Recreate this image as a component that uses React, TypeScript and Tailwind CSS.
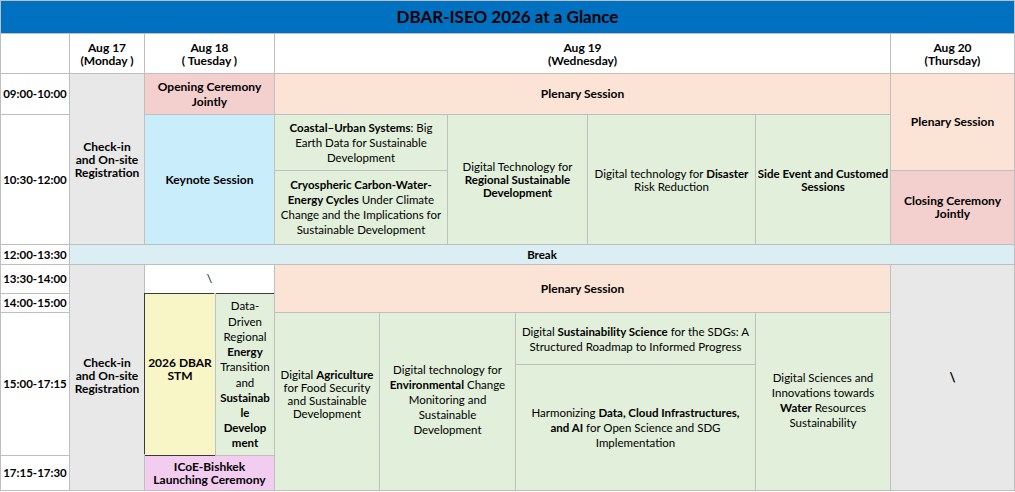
const font = { fontFamily: 'Lato, "Open Sans", sans-serif' };

type CellProps = { className: string; children?: React.ReactNode };

function Cell({ className, children }: CellProps) {
  return <div className={`flex flex-col items-center justify-center text-center text-black ${className}`}>{children}</div>;
}

export default function App() {
  return (
    <div className="bg-white w-[1015px] h-[492px]" style={font}>
      <div className="grid w-[1015px] gap-px p-px bg-[#bfbfbf] grid-cols-[68px_74px_70px_58px_104px_67px_67px_71px_167px_134px_123px] grid-rows-[32px_39px_40px_55px_73px_19px_28px_18px_51px_90px_34px]">
        {/* title */}
        <Cell className="col-start-1 col-span-11 row-start-1 bg-[#0070c0] text-[17px] font-bold">DBAR-ISEO 2026 at a Glance</Cell>

        {/* header */}
        <Cell className="col-start-1 row-start-2 bg-white" />
        <Cell className="col-start-2 row-start-2 bg-white text-[12px] font-bold leading-[13px]">
          <span>Aug 17</span>
          <span>(Monday )</span>
        </Cell>
        <Cell className="col-start-3 col-span-2 row-start-2 bg-white text-[12px] font-bold leading-[13px]">
          <span>Aug 18</span>
          <span>( Tuesday )</span>
        </Cell>
        <Cell className="col-start-5 col-span-6 row-start-2 bg-white text-[12px] font-bold leading-[13px]">
          <span>Aug 19</span>
          <span>(Wednesday)</span>
        </Cell>
        <Cell className="col-start-11 row-start-2 bg-white text-[12px] font-bold leading-[13px]">
          <span>Aug 20</span>
          <span>(Thursday)</span>
        </Cell>

        {/* time column */}
        <Cell className="col-start-1 row-start-3 bg-white text-[11.5px] font-bold">09:00-10:00</Cell>
        <Cell className="col-start-1 row-start-4 row-span-2 bg-white text-[11.5px] font-bold">10:30-12:00</Cell>
        <Cell className="col-start-1 row-start-6 bg-white text-[11.5px] font-bold">12:00-13:30</Cell>
        <Cell className="col-start-1 row-start-7 bg-white text-[11.5px] font-bold">13:30-14:00</Cell>
        <Cell className="col-start-1 row-start-8 bg-white text-[11.5px] font-bold">14:00-15:00</Cell>
        <Cell className="col-start-1 row-start-9 row-span-2 bg-white text-[11.5px] font-bold">15:00-17:15</Cell>
        <Cell className="col-start-1 row-start-11 bg-white text-[11.5px] font-bold">17:15-17:30</Cell>

        {/* morning */}
        <Cell className="col-start-2 row-start-3 row-span-3 bg-[#e8e8e8] text-[12px] font-bold leading-[13px]">
          <span>Check-in</span>
          <span>and On-site</span>
          <span>Registration</span>
        </Cell>
        <Cell className="col-start-3 col-span-2 row-start-3 bg-[#f3cfce] text-[12px] font-bold leading-[15px]">
          <span>Opening Ceremony</span>
          <span>Jointly</span>
        </Cell>
        <Cell className="col-start-5 col-span-6 row-start-3 bg-[#fbe3d6] text-[12px] font-bold">Plenary Session</Cell>
        <Cell className="col-start-11 row-start-3 row-span-2 bg-[#fbe3d6] text-[12px] font-bold">Plenary Session</Cell>

        <Cell className="col-start-3 col-span-2 row-start-4 row-span-2 bg-[#caedfb] text-[12px] font-bold">Keynote Session</Cell>
        <Cell className="col-start-5 col-span-2 row-start-4 bg-[#e2efda] text-[11.5px] leading-[15px]">
          <span>
            <b>Coastal–Urban Systems</b>: Big
          </span>
          <span>Earth Data for Sustainable</span>
          <span>Development</span>
        </Cell>
        <Cell className="col-start-5 col-span-2 row-start-5 bg-[#e2efda] text-[11.5px] leading-[15px] pb-0.5">
          <b>Cryospheric Carbon-Water-</b>
          <span>
            <b>Energy Cycles</b> Under Climate
          </span>
          <span>Change and the Implications for</span>
          <span>Sustainable Development</span>
        </Cell>
        <Cell className="col-start-7 col-span-2 row-start-4 row-span-2 bg-[#e2efda] text-[11.5px] leading-[13px]">
          <span>Digital Technology for</span>
          <b>Regional Sustainable</b>
          <b>Development</b>
        </Cell>
        <Cell className="col-start-9 row-start-4 row-span-2 bg-[#e2efda] text-[11.5px] leading-[13px]">
          <span>
            Digital technology for <b>Disaster</b>
          </span>
          <span>Risk Reduction</span>
        </Cell>
        <Cell className="col-start-10 row-start-4 row-span-2 bg-[#e2efda] text-[11.5px] font-bold leading-[13px]">
          <span>Side Event and Customed</span>
          <span>Sessions</span>
        </Cell>
        <Cell className="col-start-11 row-start-5 bg-[#f3cfce] text-[12px] font-bold leading-[13px] pb-0.5">
          <span>Closing Ceremony</span>
          <span>Jointly</span>
        </Cell>

        {/* break */}
        <Cell className="col-start-2 col-span-10 row-start-6 bg-[#daeef3] text-[11.5px] font-bold">Break</Cell>

        {/* afternoon */}
        <Cell className="col-start-2 row-start-7 row-span-5 bg-[#e8e8e8] text-[12px] font-bold leading-[13px] pb-1">
          <span>Check-in</span>
          <span>and On-site</span>
          <span>Registration</span>
        </Cell>
        <Cell className="col-start-3 col-span-2 row-start-7 bg-white text-[12px]">\</Cell>
        <Cell className="col-start-5 col-span-6 row-start-7 row-span-2 bg-[#fbe3d6] text-[12px] font-bold">Plenary Session</Cell>
        <Cell className="col-start-11 row-start-7 row-span-5 bg-[#e8e8e8] text-[13px] font-bold">\</Cell>

        <Cell className="col-start-3 row-start-8 row-span-3 bg-[#f8f5c6] text-[12px] font-bold leading-[13px] pb-3 shadow-[-1px_-1px_0_0_#3a3a3a,0_1px_0_0_#3a3a3a]">
          <span>2026 DBAR</span>
          <span>STM</span>
        </Cell>
        <Cell className="col-start-4 row-start-8 row-span-3 bg-[#e2efda] text-[11.5px] leading-[15.2px] shadow-[0_-1px_0_0_#3a3a3a]">
          <span>Data-</span>
          <span>Driven</span>
          <span>Regional</span>
          <b>Energy</b>
          <span>Transition</span>
          <span>and</span>
          <b>Sustainab</b>
          <b>le</b>
          <b>Develop</b>
          <b>ment</b>
        </Cell>
        <Cell className="col-start-3 col-span-2 row-start-11 bg-[#f2cdf0] text-[12px] font-bold leading-[13px]">
          <span>ICoE-Bishkek</span>
          <span>Launching Ceremony</span>
        </Cell>

        <Cell className="col-start-5 row-start-9 row-span-3 bg-[#e2efda] text-[11.5px] leading-[13px] pb-4">
          <span>
            Digital <b>Agriculture</b>
          </span>
          <span>for Food Security</span>
          <span>and Sustainable</span>
          <span>Development</span>
        </Cell>
        <Cell className="col-start-6 col-span-2 row-start-9 row-span-3 bg-[#e2efda] text-[11.5px] leading-[15px] pb-1">
          <span>Digital technology for</span>
          <span>
            <b>Environmental</b> Change
          </span>
          <span>Monitoring and</span>
          <span>Sustainable</span>
          <span>Development</span>
        </Cell>
        <Cell className="col-start-8 col-span-2 row-start-9 bg-[#e2efda] text-[11.5px] leading-[15px]">
          <span>
            Digital <b>Sustainability Science</b> for the SDGs: A
          </span>
          <span>Structured Roadmap to Informed Progress</span>
        </Cell>
        <Cell className="col-start-8 col-span-2 row-start-10 row-span-2 bg-[#e2efda] text-[11.5px] leading-[15px]">
          <span>
            Harmonizing <b>Data, Cloud Infrastructures,</b>
          </span>
          <span>
            <b>and AI</b> for Open Science and SDG
          </span>
          <span>Implementation</span>
        </Cell>
        <Cell className="col-start-10 row-start-9 row-span-3 bg-[#e2efda] text-[11.5px] leading-[15px] pb-1">
          <span>Digital Sciences and</span>
          <span>Innovations towards</span>
          <span>
            <b>Water</b> Resources
          </span>
          <span>Sustainability</span>
        </Cell>
      </div>
    </div>
  );
}
